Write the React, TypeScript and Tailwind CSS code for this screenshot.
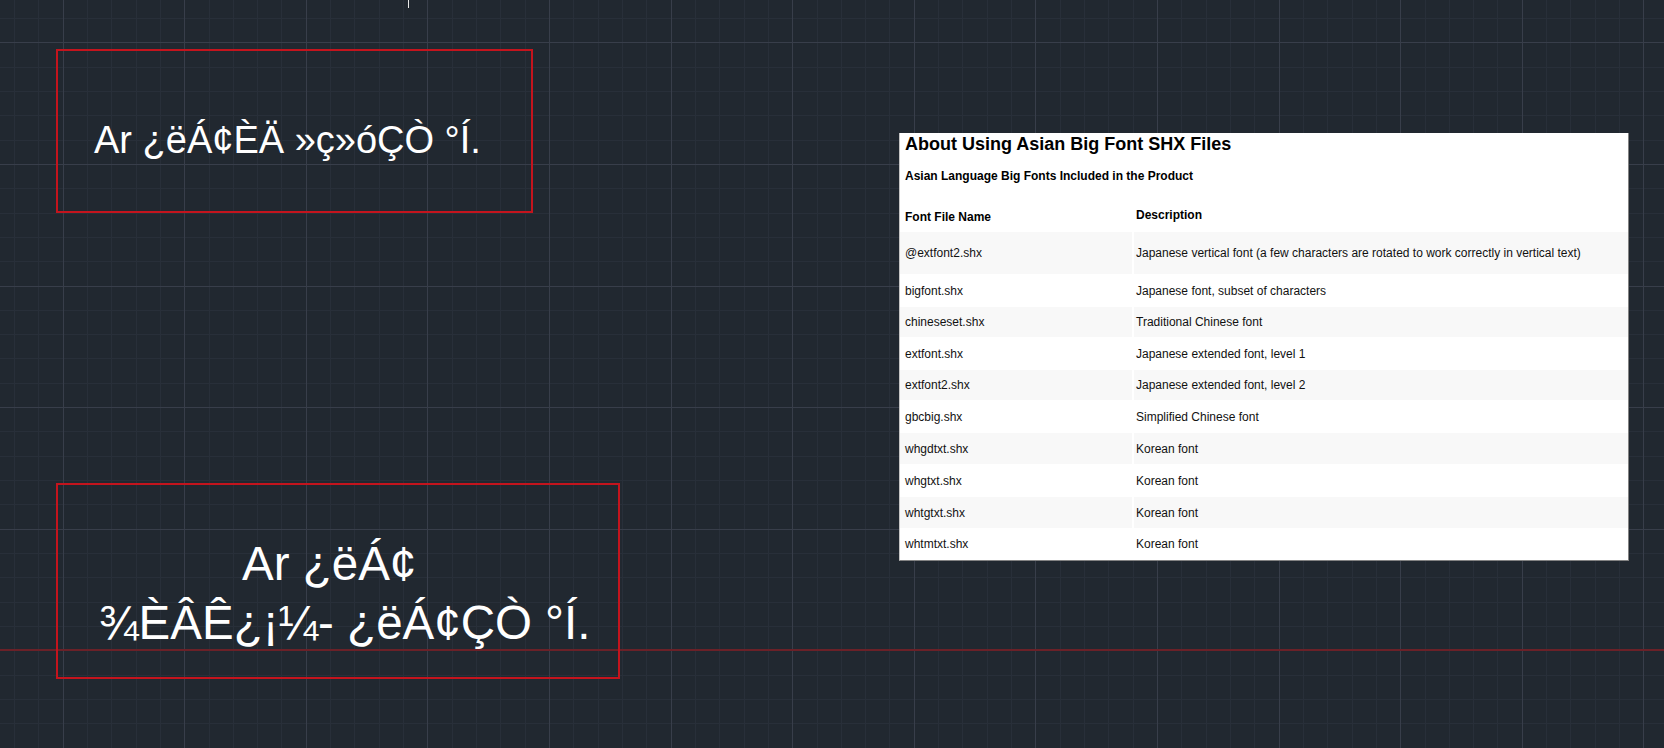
import React from "react"

const FONT = { fontFamily: '"Liberation Sans", Arial, sans-serif' }

const fontRows = [
  { file: "@extfont2.shx", desc: "Japanese vertical font (a few characters are rotated to work correctly in vertical text)", h: "h-[42px]" },
  { file: "bigfont.shx", desc: "Japanese font, subset of characters", h: "h-[33px]" },
  { file: "chineseset.shx", desc: "Traditional Chinese font", h: "h-[30px]" },
  { file: "extfont.shx", desc: "Japanese extended font, level 1", h: "h-[33px]" },
  { file: "extfont2.shx", desc: "Japanese extended font, level 2", h: "h-[30px]" },
  { file: "gbcbig.shx", desc: "Simplified Chinese font", h: "h-[33px]" },
  { file: "whgdtxt.shx", desc: "Korean font", h: "h-[31px]" },
  { file: "whgtxt.shx", desc: "Korean font", h: "h-[33px]" },
  { file: "whtgtxt.shx", desc: "Korean font", h: "h-[31px]" },
  { file: "whtmtxt.shx", desc: "Korean font", h: "h-[32px]" },
]

// drafting grid: minor every 24.32px, major every 5th line
function DraftGrid() {
  const cols = Array.from({ length: 69 }, (_, k) => k)
  const rows = Array.from({ length: 31 }, (_, k) => k)
  const vx = (k: number) => Math.round(13.96 + 24.32 * k)
  const hy = (k: number) => Math.round(17.98 + 24.32 * k)
  return (
    <svg className="absolute inset-0" width={1664} height={748} shapeRendering="crispEdges">
      {cols.filter((k) => (k - 2) % 5 !== 0).map((k) => (
        <rect key={`v${k}`} x={vx(k)} y={0} width={1} height={748} fill="#282f39" />
      ))}
      {rows.filter((k) => (k - 1) % 5 !== 0).map((k) => (
        <rect key={`h${k}`} x={0} y={hy(k)} width={1664} height={1} fill="#282f39" />
      ))}
      {cols.filter((k) => (k - 2) % 5 === 0).map((k) => (
        <rect key={`V${k}`} x={vx(k)} y={0} width={1} height={748} fill="#383e4a" />
      ))}
      {rows.filter((k) => (k - 1) % 5 === 0).map((k) => (
        <rect key={`H${k}`} x={0} y={hy(k)} width={1664} height={1} fill="#383e4a" />
      ))}
    </svg>
  )
}

function FontTable() {
  return (
    <div className="absolute left-[899px] top-[133px] w-[730px] bg-white border-l border-l-[#c4c4c4] border-r border-b border-r-[#838383] border-b-[#838383] text-[#111]">
      <h1 className="pl-[5px] pt-[2px] text-[18px] leading-[19px] font-bold text-black">About Using Asian Big Font SHX Files</h1>
      <h2 className="mt-[14px] pl-[5px] text-[12px] leading-[16px] font-bold text-black">Asian Language Big Fonts Included in the Product</h2>
      <div className="grid h-[48px] grid-cols-[232px_1fr] gap-x-[2px] text-[12px] leading-[16px] font-bold text-black">
        <div className="pl-[5px] pt-[25px]">Font File Name</div>
        <div className="pl-[2px] pt-[23px]">Description</div>
      </div>
      {fontRows.map((r, i) => (
        <div key={r.file} className={`grid grid-cols-[232px_1fr] gap-x-[2px] text-[12px] leading-[16px] ${r.h}`}>
          <div className={`flex items-center pl-[5px] ${i % 2 === 0 ? "bg-[#f8f8f8]" : "bg-white"}`}>{r.file}</div>
          <div className={`flex items-center pl-[2px] ${i % 2 === 0 ? "bg-[#f8f8f8]" : "bg-white"}`}>{r.desc}</div>
        </div>
      ))}
    </div>
  )
}

export default function App() {
  return (
    <div className="relative h-[748px] w-[1664px] overflow-hidden bg-[#212830]" style={FONT}>
      <DraftGrid />

      {/* x axis */}
      <div className="absolute left-0 top-[649px] h-[2px] w-full bg-[#6b2128]" />

      {/* crosshair stub */}
      <div className="absolute left-[408px] top-0 h-[8px] w-px bg-[#e8e8e8]" />

      {/* mtext 1 */}
      <div className="absolute left-[56px] top-[49px] h-[164px] w-[477px] border-2 border-[#c4141d] pl-[36px] pt-[70px]">
        <p className="whitespace-nowrap text-[38px] leading-[38px] text-white">Ar ¿ëÁ¢ÈÄ »ç»óÇÒ °Í.</p>
      </div>

      {/* mtext 2 */}
      <div className="absolute left-[56px] top-[483px] h-[196px] w-[564px] border-2 border-[#c4141d] pt-[50px] text-[47.5px] leading-[58.6px] text-white">
        <p className="whitespace-nowrap pl-[184px]">Ar ¿ëÁ¢</p>
        <p className="whitespace-nowrap pl-[41px]">¾ÈÂÊ¿¡¼- ¿ëÁ¢ÇÒ °Í.</p>
      </div>

      <FontTable />
    </div>
  )
}
